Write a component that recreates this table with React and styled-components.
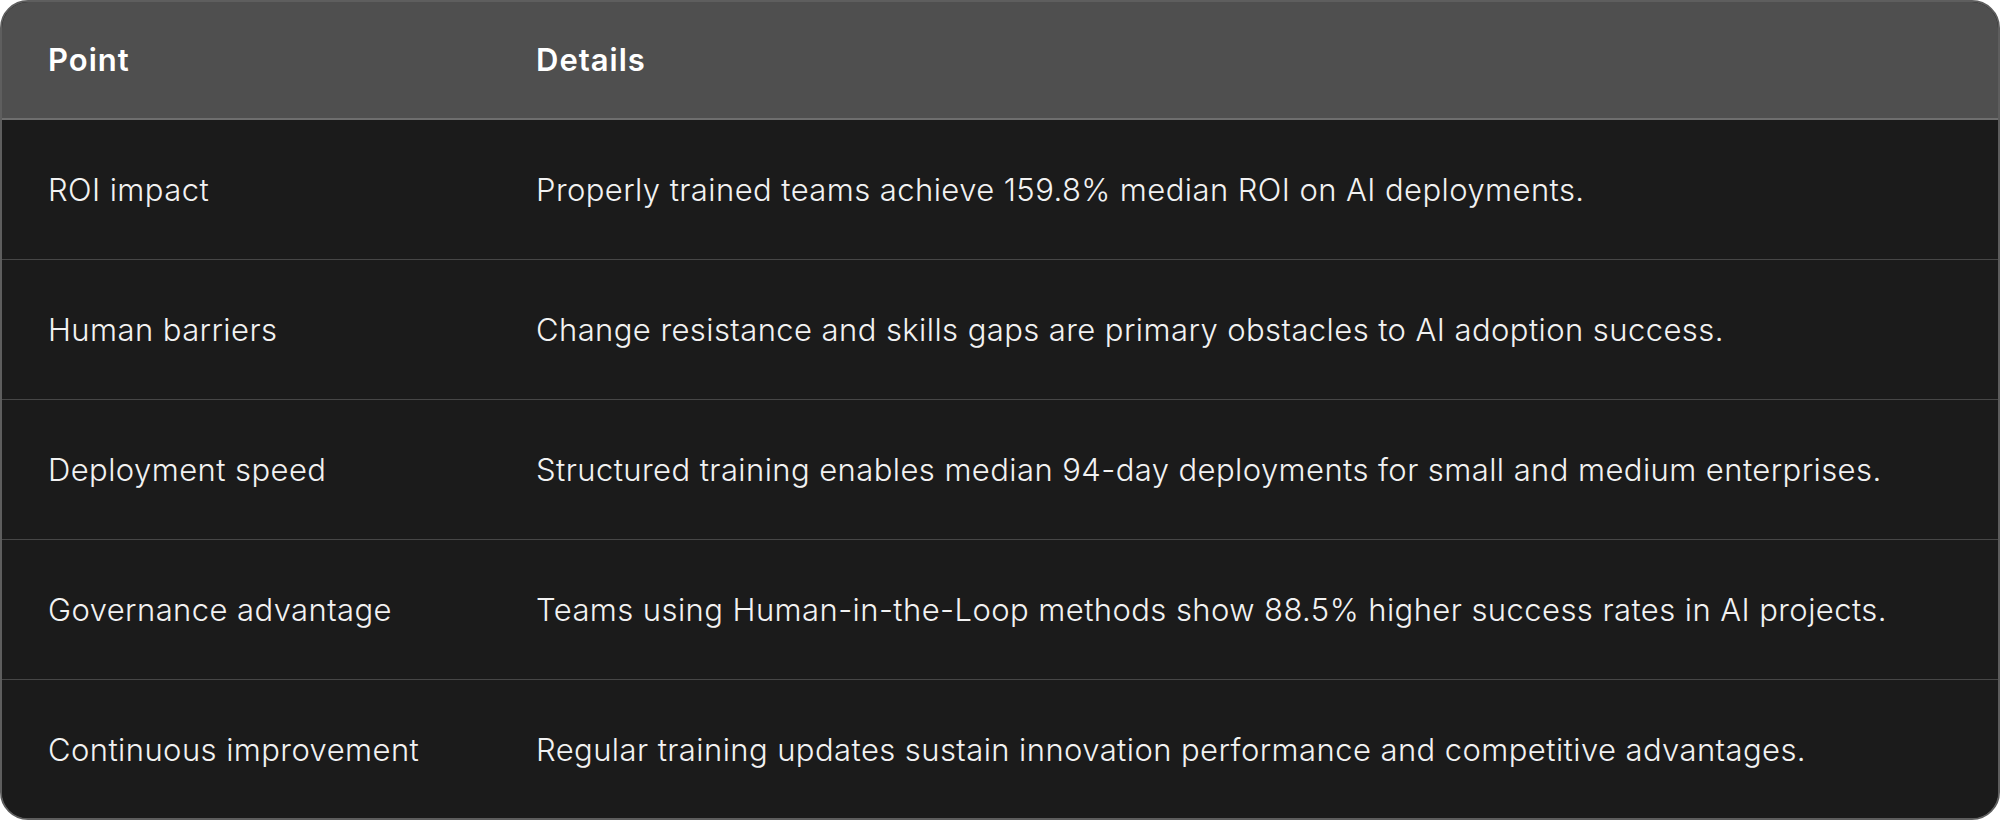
import React from "react";
import styled, { createGlobalStyle } from "styled-components";

const Global = createGlobalStyle`
  html, body { margin: 0; padding: 0; background: #ffffff; }
  body { font-family: Inter, "Noto Sans", sans-serif; }
`;

const Card = styled.div`
  width: 2000px;
  height: 820px;
  box-sizing: border-box;
  border: 2px solid #5e5e5e;
  border-radius: 28px;
  overflow: hidden;
  background: #1b1b1b;
  display: flex;
  flex-direction: column;
`;

const Row = styled.div`
  display: grid;
  grid-template-columns: 488px 1fr;
  align-items: center;
  height: ${(p) => (p.$head ? "118px" : "140px")};
  flex: ${(p) => (p.$last ? "1" : "none")};
  background: ${(p) => (p.$head ? "#4f4f4f" : "#1b1b1b")};
  border-bottom: ${(p) =>
    p.$last ? "none" : p.$head ? "2px solid #6e6e6e" : "1px solid #474747"};
  padding-left: 46px;
  padding-bottom: ${(p) => (p.$head ? "2px" : "0")};
  box-sizing: border-box;
`;

const Cell = styled.div`
  color: ${(p) => (p.$head ? "#ffffff" : "#f2f2f2")};
  font-family: Inter, "Noto Sans", sans-serif;
  font-size: 31px;
  font-weight: ${(p) => (p.$head ? 600 : 300)};
  letter-spacing: ${(p) => (p.$head ? "1px" : "0.42px")};
  white-space: nowrap;
`;

const data = [
  ["ROI impact", "Properly trained teams achieve 159.8% median ROI on AI deployments."],
  ["Human barriers", "Change resistance and skills gaps are primary obstacles to AI adoption success."],
  ["Deployment speed", "Structured training enables median 94-day deployments for small and medium enterprises."],
  ["Governance advantage", "Teams using Human-in-the-Loop methods show 88.5% higher success rates in AI projects."],
  ["Continuous improvement", "Regular training updates sustain innovation performance and competitive advantages."],
];

export default function App() {
  return (
    <>
      <Global />
      <Card>
        <Row $head>
          <Cell $head>Point</Cell>
          <Cell $head>Details</Cell>
        </Row>
        {data.map(([a, b], i) => (
          <Row key={a} $last={i === data.length - 1}>
            <Cell>{a}</Cell>
            <Cell>{b}</Cell>
          </Row>
        ))}
      </Card>
    </>
  );
}
